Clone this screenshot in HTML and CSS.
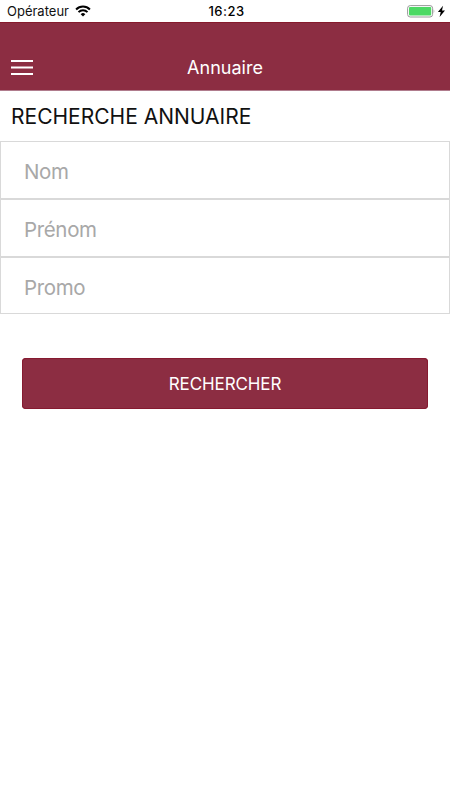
FILE: index.html
```html
<!DOCTYPE html>
<html lang="fr">
<head>
<meta charset="utf-8">
<title>Annuaire</title>
<link rel="stylesheet" href="styles.css">
</head>
<body>
<div class="status">
  <div class="network">
    <span class="carrier">Opérateur</span>
    <svg class="wifi" width="16" height="12" viewBox="0 0 16 12"><path d="M8 11.6 5.7 9.2a3.3 3.3 0 0 1 4.6 0z"/><path class="arc" d="M3.5 7.1a6.3 6.3 0 0 1 9 0M1.1 4.5a9.7 9.7 0 0 1 13.8 0"/></svg>
  </div>
  <span class="time">16:23</span>
  <svg class="battery" width="39" height="13" viewBox="0 0 39 13"><rect x=".6" y=".6" width="25" height="11.4" rx="2.6" fill="none" stroke="#999"/><rect x="2" y="2" width="22.2" height="8.6" rx="1" fill="#4cd964"/><path d="M26.7 4.2q1.6 2.1 0 4.2z" fill="#999"/><path d="M36 .8 30.9 7h2.8l-1.1 4.9L38 5.4h-3z"/></svg>
</div>
<header class="bar">
  <button class="menu" aria-label="Menu"><svg width="22" height="16" viewBox="0 0 22 16"><path d="M0 1h22M0 7.5h22M0 14h22"/></svg></button>
  <span class="title">Annuaire</span>
</header>
<main>
  <h1>RECHERCHE ANNUAIRE</h1>
  <form>
    <input placeholder="Nom" aria-label="Nom">
    <input placeholder="Prénom" aria-label="Prénom">
    <input placeholder="Promo" aria-label="Promo">
    <button class="submit" type="button">RECHERCHER</button>
  </form>
</main>
</body>
</html>
```
FILE: styles.css
```css
* { box-sizing: border-box; }
body { margin: 0; height: 800px; overflow: hidden; background: #fff; font-family: Inter, "Liberation Sans", sans-serif; }
.status { height: 22px; display: grid; grid-template-columns: 1fr auto 1fr; align-items: center; padding: 0 4px 0 7px; font-size: 13px; }
.network { display: flex; align-items: center; gap: 6px; }
.carrier { color: #111; }
.wifi .arc { fill: none; stroke: #000; stroke-width: 2; }
.time { font-weight: 500; letter-spacing: .5px; }
.battery { justify-self: end; }
.bar { height: 69px; background: #8c2d42; border-top: 1px solid #861a2c; border-bottom: 1px solid #b07c8d; color: #fff; display: grid; grid-template-columns: 33px 1fr 33px; align-items: center; padding-top: 22px; }
.menu { display: flex; padding: 0 0 0 11px; border: 0; background: none; }
.menu path { stroke: #fff; stroke-width: 2.1; }
.title { text-align: center; font-size: 18px; }
h1 { margin: 0; height: 50px; line-height: 52px; padding-left: 11px; font-size: 21px; font-weight: 400; color: #111; }
form { display: flex; flex-direction: column; }
input { height: 58px; padding: 3px 23px 0; border: 1px solid #d9d9d9; border-radius: 0; outline: 0; font: 20.5px Inter, sans-serif; letter-spacing: -.35px; }
input:nth-child(3) { height: 57px; }
input::placeholder { color: #a8a8a8; }
.submit { margin: 44px 22px 0; height: 51px; border: 0; border-radius: 4px; background: #8c2d42; color: #fff; font: 17px Inter, sans-serif; letter-spacing: -.1px; box-shadow: inset 0 0 0 1px #861a30; }
```
